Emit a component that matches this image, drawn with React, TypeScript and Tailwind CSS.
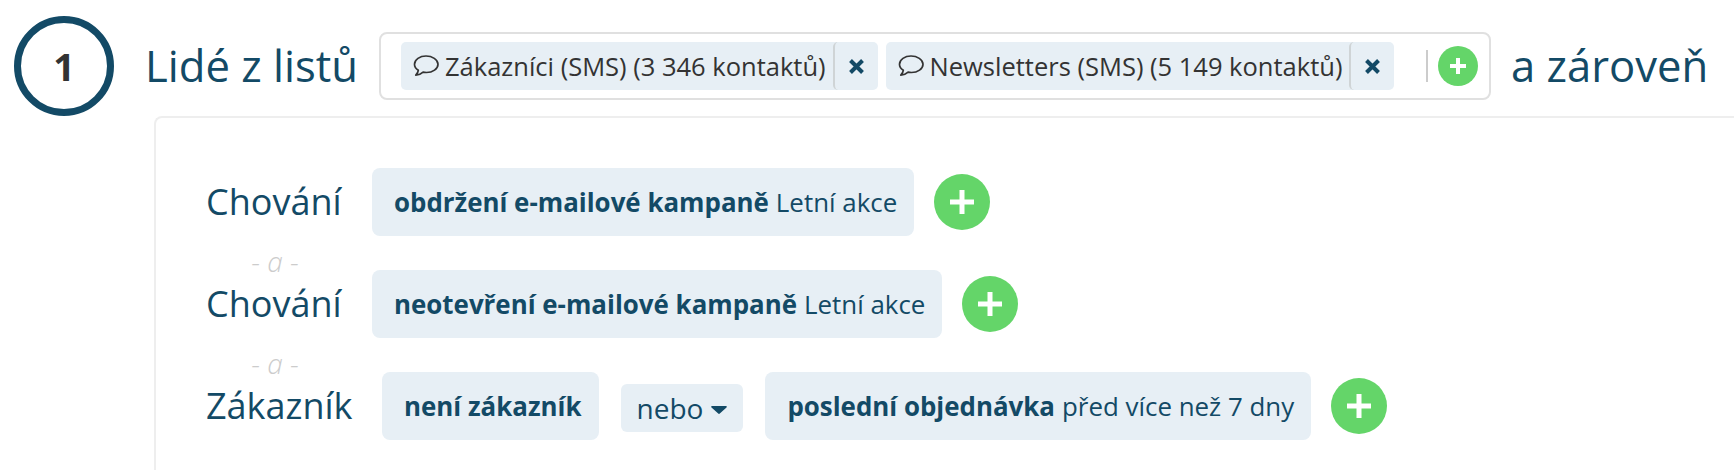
const Plus = ({ size, thick }: { size: number; thick: number }) => (
  <svg width={size} height={size} viewBox={`0 0 ${size} ${size}`} fill="#fff">
    <rect x={(size - thick) / 2} y={0} width={thick} height={size} />
    <rect x={0} y={(size - thick) / 2} width={size} height={thick} />
  </svg>
);

const AddButton = () => (
  <button className="ml-5 flex h-14 w-14 shrink-0 items-center justify-center rounded-full bg-[#64d569]">
    <Plus size={24} thick={5} />
  </button>
);

const Bubble = () => (
  <svg width="26" height="24" viewBox="0 0 26 24" fill="none" stroke="#333" strokeWidth="1.7" className="shrink-0">
    <path d="M13 2C6.9 2 1.5 5.500 1.500 10.200c0 2.500 1.500 4.600 3.800 6.100-.2 1.700-1.100 3.400-2.500 4.900 2.900-.2 5.500-1.300 7.300-3 1 .2 2.100.3 3.400.3 6.100 0 11.500-3.600 11.500-8.300S19.100 2 13 2z" strokeLinejoin="round" />
  </svg>
);

const ListTag = ({ label }: { label: string }) => (
  <div className="flex h-12 items-center rounded-[5px] bg-[#e7eff5] pl-3 text-[25.5px] text-[#333]">
    <Bubble />
    <span className="ml-[6px] mr-[7px] whitespace-nowrap">{label}</span>
    <button className="flex h-12 w-[45px] items-center justify-center rounded-[5px] border-l-2 border-[#cfd4d6]">
      <svg width="15" height="15" viewBox="0 0 15 15" stroke="#134a66" strokeWidth="4">
        <path d="M1.500 1.500l12 12M13.500 1.500l-12 12" />
      </svg>
    </button>
  </div>
);

const Pill = ({ bold, rest }: { bold: string; rest?: string }) => (
  <div className="flex h-[68px] items-center whitespace-nowrap rounded-lg bg-[#e7eff5] pl-[22px] pr-[17px] text-[25.9px] text-[#134a66]">
    <b className="font-bold">{bold}</b>
    {rest && <span className="ml-[7px]">{rest}</span>}
  </div>
);

const Separator = () => (
  <div className="flex h-[34px] w-[138px] items-center justify-center pt-4 text-[28px] font-light italic leading-none text-[#ccc]">
    - a -
  </div>
);

const App = () => {
  return (
    <div className="h-[470px] w-full overflow-hidden bg-white font-['Open_Sans',sans-serif] text-[#134a66]">
      {/* HEADER */}
      <div className="flex h-[116px] items-center pl-[14px] pt-4">
        <div className="flex h-[100px] w-[100px] shrink-0 items-center justify-center rounded-full border-[7px] border-[#134a66] text-[38px] font-bold text-[#333]">
          1
        </div>
        <h1 className="ml-[31px] w-[234px] shrink-0 whitespace-nowrap text-[43.6px]">Lidé z listů</h1>
        <div className="flex h-[68px] w-[1112px] shrink-0 items-center rounded-lg border-2 border-[#e0e0e0] pl-5">
          <ListTag label="Zákazníci (SMS) (3 346 kontaktů)" />
          <div className="ml-2">
            <ListTag label="Newsletters (SMS) (5 149 kontaktů)" />
          </div>
          <div className="ml-[32px] h-8 w-0.5 bg-[#ccc]" />
          <button className="ml-[10px] flex h-10 w-10 items-center justify-center rounded-full bg-[#64d569]">
            <Plus size={16} thick={4} />
          </button>
        </div>
        <span className="ml-5 whitespace-nowrap text-[43.6px]">a zároveň</span>
      </div>
      {/* CONDITIONS */}
      <div className="ml-[154px] h-[400px] rounded-tl-lg border-l-2 border-t-2 border-[#eee] pl-[50px] pt-[50px]">
        <div className="flex items-center">
          <span className="w-[166px] text-[36px]">Chování</span>
          <Pill bold="obdržení e-mailové kampaně" rest="Letní akce" />
          <AddButton />
        </div>
        <Separator />
        <div className="flex items-center">
          <span className="w-[166px] text-[36px]">Chování</span>
          <Pill bold="neotevření e-mailové kampaně" rest="Letní akce" />
          <AddButton />
        </div>
        <Separator />
        <div className="flex items-center">
          <span className="w-[176px] text-[36px]">Zákazník</span>
          <Pill bold="není zákazník" />
          <button className="mx-[22px] mt-1 flex h-12 items-center rounded-md bg-[#e7eff5] pl-4 pr-4 text-[28px] text-[#134a66]">
            nebo
            <svg width="16" height="8" viewBox="0 0 16 8" fill="#134a66" className="ml-2 mt-1">
              <path d="M1 0h14c1 0 1 1 .5 1.500L8.800 7.600c-.4.4-1.200.4-1.600 0L.5 1.500C0 1 0 0 1 0z" />
            </svg>
          </button>
          <Pill bold="poslední objednávka" rest="před více než 7 dny" />
          <AddButton />
        </div>
      </div>
    </div>
  );
};

export default App;
